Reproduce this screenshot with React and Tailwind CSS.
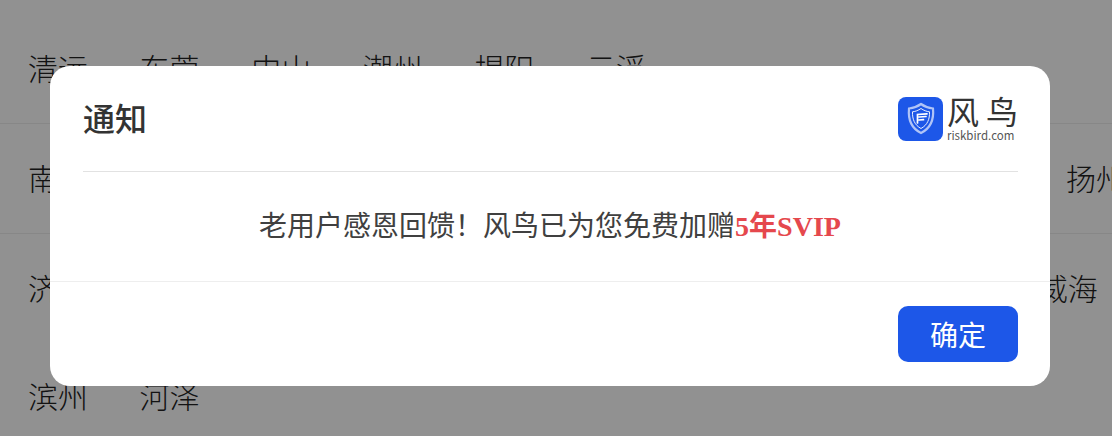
const rows = [
  { gap: 'gap-[51.6px]', cities: ['清远', '东莞', '中山', '潮州', '揭阳', '云浮'] },
  { gap: 'gap-[52px]', cities: ['南京', '无锡', '徐州', '常州', '苏州', '南通', '连云港', '淮安', '盐城', '扬州'] },
];
const lastRows = [
  { gap: 'gap-[52.2px]', cities: ['济南', '青岛', '淄博', '枣庄', '东营', '烟台', '潍坊', '济宁', '泰安', '威海'] },
  { gap: 'gap-[51.6px]', cities: ['滨州', '河泽'] },
];

function CityLine({ row, height }) {
  return (
    <div className={`flex items-center whitespace-nowrap pb-[2px] pl-[28px] text-[30px] font-light text-[#222222] ${height} ${row.gap}`}>
      {row.cities.map((city) => (
        <span key={city}>{city}</span>
      ))}
    </div>
  );
}

function Logo() {
  return (
    <div className="flex items-start gap-[4px]">
      <div className="mt-[2px] flex h-[44px] w-[45px] items-center justify-center rounded-[8px] bg-[#1d57e8]">
        <svg width="30" height="33" viewBox="0 0 30 33" fill="none">
          <path d="M15 2 C19 5 23 6 27 6.500 C28 17 25 26 15 31 C5 26 2 17 3 6.500 C7 6 11 5 15 2 Z" stroke="#ffffff" strokeOpacity="0.65" strokeWidth="2.200" />
          <path d="M15 6.500 C18 8.500 20.500 9.500 23.500 9.800 C23.800 17 21.500 23 15 26.500 C8.500 23 6.200 17 6.500 9.800 C9.500 9.500 12 8.500 15 6.500 Z" stroke="#ffffff" strokeOpacity="0.9" strokeWidth="1" />
          <path d="M11.500 21 L11.500 12.500 L21 11.800 M13 15 L20 14.500 M13 18 L17.500 17.700" stroke="#ffffff" strokeWidth="1.700" strokeLinecap="round" />
        </svg>
      </div>
      <div className="flex w-[71px] flex-col">
        <span className="h-[31px] text-[32px] leading-[31px] tracking-[7px] whitespace-nowrap text-[#333333]">风鸟</span>
        <span className="mt-[3px] text-[11.500px] leading-[12px] whitespace-nowrap text-[#555555]">riskbird.com</span>
      </div>
    </div>
  );
}

export default function App() {
  return (
    <div className="relative h-[436px] w-[1112px] overflow-hidden bg-white font-['Noto_Sans_CJK_SC','Liberation_Sans',sans-serif]">
      <div className="pt-[14px]">
        {rows.map((row) => (
          <div key={row.cities[0]} className="border-b border-[#eeeeee]">
            <CityLine row={row} height="h-[109px]" />
          </div>
        ))}
        <div>
          {lastRows.map((row) => (
            <CityLine key={row.cities[0]} row={row} height="h-[108px]" />
          ))}
        </div>
      </div>

      <div className="absolute inset-0 flex justify-center bg-black/43 pt-[66px] pr-[12px]">
        <div className="flex h-[320px] w-[1000px] flex-col rounded-[20px] bg-white pr-[32px] pl-[33px]">
          <div className="flex h-[106px] flex-none items-center justify-between border-b border-[#e2e2e2] pb-[2px]">
            <h2 className="mb-[2px] text-[32px] font-medium text-[#333333]">通知</h2>
            <Logo />
          </div>
          <div className="-mr-[32px] -ml-[33px] flex h-[110px] flex-none items-center justify-center border-b border-[#eeeeee] pb-[1px] text-[28px] text-[#404040]">
            <p className="mb-[2px]">
              老用户感恩回馈！风鸟已为您免费加赠
              <span className="font-['Liberation_Serif','Noto_Sans_CJK_SC',serif] font-bold text-[#e5484d]">5年SVIP</span>
            </p>
          </div>
          <div className="flex flex-1 items-center justify-end">
            <button className="mt-[-1px] h-[56px] w-[120px] rounded-[10px] bg-[#1d57e8] text-[28px] text-white">确定</button>
          </div>
        </div>
      </div>
    </div>
  );
}
